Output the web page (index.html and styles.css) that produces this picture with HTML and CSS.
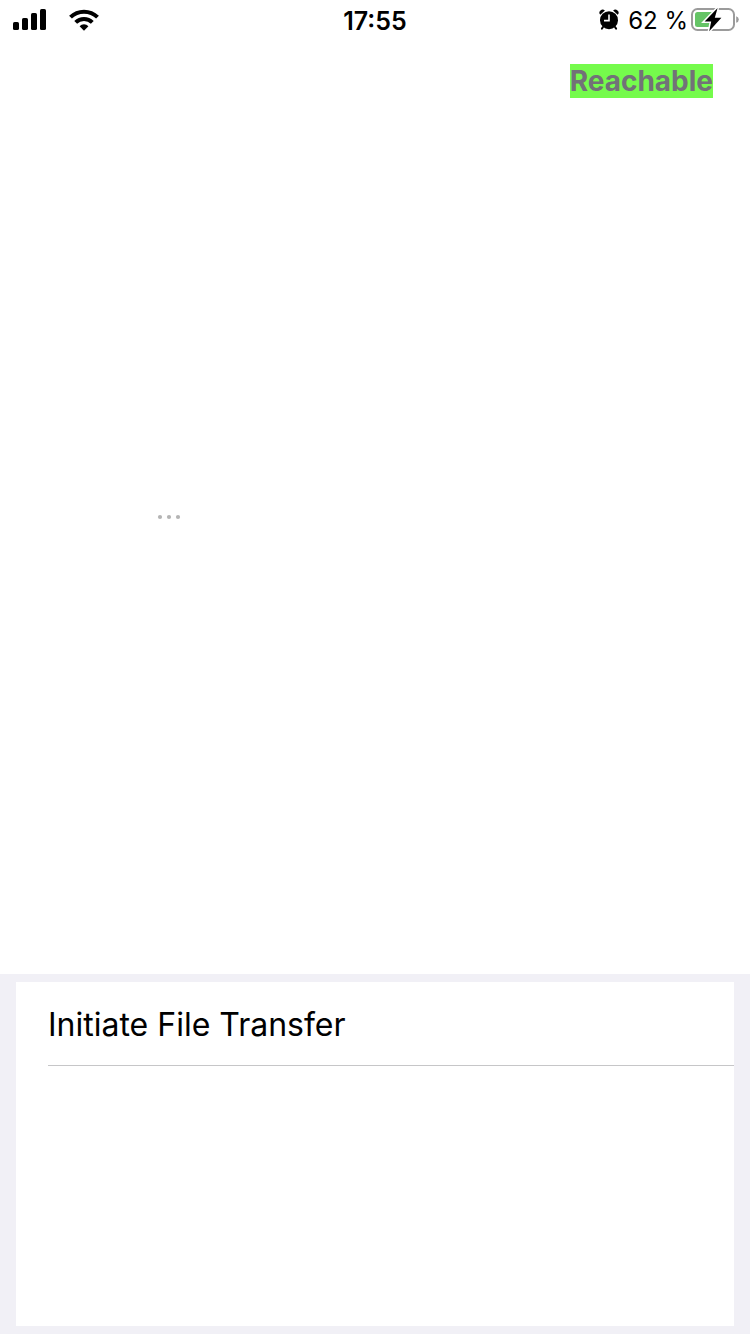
FILE: index.html
```html
<!DOCTYPE html>
<html lang="en">
<head>
<meta charset="utf-8">
<meta name="viewport" content="width=device-width, initial-scale=1">
<title>File Transfer</title>
<link rel="stylesheet" href="styles.css">
</head>
<body>
<div class="screen">
  <header class="status-bar">
    <div class="status-left">
      <svg class="signal" width="34" height="22" viewBox="0 0 34 22" aria-hidden="true">
        <rect x="0" y="13" width="6" height="8" rx="1.6"/>
        <rect x="9" y="9" width="6" height="12" rx="1.6"/>
        <rect x="18" y="4" width="6" height="17" rx="1.6"/>
        <rect x="27" y="0" width="6" height="21" rx="1.6"/>
      </svg>
      <svg class="wifi" width="30" height="22" viewBox="0 0 30 22" aria-hidden="true">
        <path class="wifi-arc" d="M1.5 8.2A19.2 19.2 0 0 1 28.5 8.2M6.7 13.4A11.8 11.8 0 0 1 23.3 13.4"/>
        <path d="M15 21.8L10.6 17.2A6.2 6.2 0 0 1 19.4 17.2Z"/>
      </svg>
    </div>
    <time class="clock">17:55</time>
    <div class="status-right">
      <svg class="alarm" width="20" height="22" viewBox="0 0 20 22" aria-hidden="true">
        <circle cx="10" cy="11.2" r="9"/>
        <path d="M1.3 5.8A2.9 2.9 0 0 1 5.9 1.6ZM18.7 5.8A2.9 2.9 0 0 0 14.1 1.6Z"/>
        <path class="alarm-leg" d="M4 18L2.9 19.6M16 18L17.1 19.6"/>
        <path class="alarm-hand" d="M10 5.4V11.6H5"/>
      </svg>
      <span class="percent">62 %</span>
      <svg class="battery" width="48" height="26" viewBox="0 0 48 26" aria-hidden="true">
        <rect class="battery-case" x="1" y="2" width="42" height="21" rx="5.5"/>
        <path class="battery-cap" d="M45.2 9.2Q47.8 10 47.8 12.5T45.2 15.8Z"/>
        <path class="battery-fill" d="M6.5 5H23V20H6.5Q4 20 4 17.5V7.5Q4 5 6.5 5Z"/>
        <path class="bolt" d="M26.6 1L13.6 14.4H20.2L18.2 24.2L30.4 10.8H23.8Z"/>
      </svg>
    </div>
  </header>
  <main class="content">
    <p class="reachability"><mark class="badge">Reachable</mark></p>
    <div class="pending">
      <svg width="24" height="6" viewBox="0 0 24 6" role="img" aria-label="Pending">
        <circle cx="3" cy="3" r="2.1"/>
        <circle cx="12" cy="3" r="2.1"/>
        <circle cx="21" cy="3" r="2.1"/>
      </svg>
    </div>
  </main>
  <section class="panel">
    <ul class="commands">
      <li class="command"><button class="command-button" type="button">Initiate File Transfer</button></li>
    </ul>
  </section>
</div>
</body>
</html>
```
FILE: styles.css
```css
* {
  box-sizing: border-box;
}

body {
  margin: 0;
  background: #fff;
  color: #000;
  font-family: Inter, "Liberation Sans", sans-serif;
}

.screen {
  display: flex;
  flex-direction: column;
  min-height: 100vh;
}

.status-bar {
  display: grid;
  grid-template-columns: 1fr auto 1fr;
  align-items: center;
  height: 40px;
  padding: 0 11px;
}

.status-left,
.status-right {
  display: flex;
  align-items: center;
}

.status-left {
  gap: 22px;
  padding-left: 2px;
}

.status-right {
  justify-content: flex-end;
}

.wifi-arc {
  fill: none;
  stroke: #000;
  stroke-width: 4;
}

.clock {
  padding-top: 2px;
  font-size: 25px;
  font-weight: 600;
  line-height: 38px;
}

.alarm-leg {
  stroke: #000;
  stroke-width: 2;
  stroke-linecap: round;
}

.alarm-hand {
  fill: none;
  stroke: #fff;
  stroke-width: 1.6;
}

.percent {
  margin: 0 3px 0 9px;
  padding-top: 2px;
  font-size: 24px;
  line-height: 38px;
}

.battery-case {
  fill: none;
  stroke: #9b9b9b;
  stroke-width: 2;
}

.battery-cap {
  fill: #9b9b9b;
}

.battery-fill {
  fill: #65c466;
}

.bolt {
  stroke: #fff;
  stroke-width: 3;
  paint-order: stroke;
}

.content {
  display: flex;
  flex: 1;
  flex-direction: column;
  padding: 24px 37px 0;
}

.reachability {
  display: flex;
  justify-content: flex-end;
  margin: 0;
}

.badge {
  background: #75fb4c;
  color: #727278;
  font-size: 28px;
  font-weight: 700;
  line-height: 34px;
}

.pending {
  display: flex;
  flex: 1;
  align-items: center;
  padding: 0 120px 38px;
  fill: #b4b4b4;
}

.panel {
  display: flex;
  min-height: 360px;
  padding: 8px 16px;
  background: #f1f0f6;
}

.commands {
  flex: 1;
  margin: 0;
  padding: 0 0 0 32px;
  background: #fff;
  list-style: none;
}

.command {
  border-bottom: 1px solid #c6c6c8;
}

.command-button {
  display: block;
  width: 100%;
  padding: 21px 0 18px;
  border: 0;
  background: none;
  color: inherit;
  font: inherit;
  font-size: 32px;
  line-height: 44px;
  text-align: left;
}
```
